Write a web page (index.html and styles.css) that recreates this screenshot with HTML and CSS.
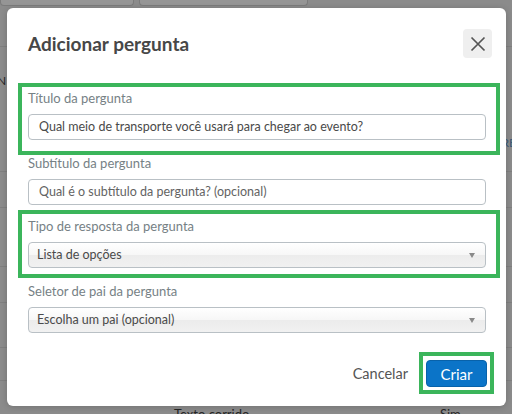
FILE: index.html
```html
<!DOCTYPE html>
<html lang="pt">
<head>
<meta charset="utf-8">
<title>Adicionar pergunta</title>
<link rel="stylesheet" href="styles.css">
</head>
<body>
<div class="page">
  <div class="tabs"><div class="tab tab-a"></div><div class="tab tab-b"></div></div>
  <div class="row r1"></div>
  <div class="row r2"><span class="cut-left">N</span><span class="cut-right">RE</span></div>
  <div class="row r3"></div>
  <div class="row r4"></div>
  <div class="row r5"></div>
  <div class="row r6"></div>
  <div class="row r7"></div>
  <div class="row r8"><span class="cell c1">Texto corrido</span><span class="cell c2">Sim</span></div>
</div>

<div class="modal" role="dialog" aria-labelledby="mtitle">
  <div class="modal-head">
    <h2 class="title" id="mtitle">Adicionar pergunta</h2>
    <button class="close" aria-label="Fechar">
      <svg width="16" height="16" viewBox="0 0 16 16"><path d="M1.5 1.5 L14.5 14.5 M14.5 1.5 L1.5 14.5" stroke="#555" stroke-width="1.7" fill="none"/></svg>
    </button>
  </div>

  <div class="form">
    <div class="field hl f1">
      <label class="label">Título da pergunta</label>
      <div class="input">Qual meio de transporte você usará para chegar ao evento?</div>
    </div>
    <div class="field f2">
      <label class="label">Subtítulo da pergunta</label>
      <div class="input placeholder">Qual é o subtítulo da pergunta? (opcional)</div>
    </div>
    <div class="field hl f3">
      <label class="label">Tipo de resposta da pergunta</label>
      <div class="input select"><span>Lista de opções</span><span class="arrow"></span></div>
    </div>
    <div class="field f4">
      <label class="label">Seletor de pai da pergunta</label>
      <div class="input select"><span>Escolha um pai (opcional)</span><span class="arrow"></span></div>
    </div>
  </div>

  <div class="footer">
    <span class="cancel">Cancelar</span>
    <div class="hl-btn"><button class="btn-primary">Criar</button></div>
  </div>
</div>
</body>
</html>
```

FILE: styles.css
```css
html, body {
  margin: 0;
  padding: 0;
}
body {
  width: 512px;
  height: 414px;
  overflow: hidden;
  position: relative;
  background: #8b8b8b;
  font-family: Lato, "Open Sans", sans-serif;
}

/* dimmed page behind the dialog */
.page {
  height: 414px;
}
.tabs {
  display: flex;
  gap: 5px;
  height: 6px;
}
.tab {
  height: 5px;
  background: #959595;
  border: 1px solid #7b7b7b;
  border-top: none;
  border-radius: 0 0 4px 4px;
}
.tab-a { width: 132px; }
.tab-b { width: 167px; }
.row {
  border-bottom: 1px solid #7f7f7f;
  position: relative;
  font-size: 13px;
  color: #262626;
}
.r1 { height: 40px; }
.r2 { height: 124px; }
.r3 { height: 35px; }
.r4 { height: 58px; }
.r5 { height: 35px; }
.r6 { height: 44px; }
.r7 { height: 32px; }
.r8 { height: 34px; }
.cut-left {
  position: absolute;
  left: -3px;
  top: 26px;
  font-size: 12px;
}
.cut-right {
  position: absolute;
  right: -4px;
  top: 88px;
  font-size: 12px;
  color: #3b5a78;
}
.cell {
  position: absolute;
  top: 25px;
}
.c1 { left: 174px; }
.c2 { left: 440px; }

/* dialog */
.modal {
  position: absolute;
  top: 8px;
  left: 7px;
  width: 499px;
  height: 398px;
  box-sizing: border-box;
  padding: 21px 20px 12px 21px;
  background: #fff;
  border-radius: 6px;
  box-shadow: 0 1px 6px rgba(0, 0, 0, 0.18);
  display: flex;
  flex-direction: column;
}
.modal-head {
  display: flex;
  justify-content: space-between;
  align-items: center;
  height: 29px;
  margin-right: -6px;
}
.title {
  margin: 0;
  font-size: 19px;
  font-weight: 700;
  color: #474747;
}
.close {
  width: 29px;
  height: 29px;
  padding: 0;
  border: none;
  border-radius: 4px;
  background: #efefef;
  display: flex;
  align-items: center;
  justify-content: center;
}

.form {
  margin-top: 25px;
}
.label {
  display: block;
  font-size: 13px;
  line-height: 16px;
  color: #768185;
}
.input {
  margin-top: 8px;
  height: 26px;
  box-sizing: border-box;
  border: 1px solid #b9c0c5;
  border-radius: 4px;
  padding: 0 10px;
  font-size: 12.5px;
  line-height: 24px;
  color: #4a4a4a;
  background: #fff;
}
.placeholder {
  color: #636363;
}
.select {
  display: flex;
  justify-content: space-between;
  align-items: center;
  padding: 0 10px 0 8px;
  background: linear-gradient(#ffffff, #f7f7f7 48%, #ececec 52%, #f1f1f1);
}
.arrow {
  width: 0;
  height: 0;
  border-left: 3.5px solid transparent;
  border-right: 3.5px solid transparent;
  border-top: 5px solid #8a8a8a;
}

.hl {
  border: 4px solid #3bb55b;
  margin-left: -10px;
  margin-right: -14px;
  padding-left: 6px;
  padding-right: 10px;
}
.f1 { padding-top: 3px; padding-bottom: 11px; }
.f3 { margin-top: 5px; padding-top: 4px; padding-bottom: 6px; }
.f4 { margin-top: 5px; }

.footer {
  margin-top: auto;
  margin-right: -8px;
  display: flex;
  justify-content: flex-end;
  align-items: center;
}
.cancel {
  font-size: 14.5px;
  color: #555;
  margin-right: 11px;
}
.hl-btn {
  border: 4px solid #3bb55b;
  padding: 4px 3px 3px 3px;
  display: flex;
}
.btn-primary {
  width: 61px;
  height: 27px;
  box-sizing: border-box;
  border: 1px solid #0862aa;
  border-radius: 4px;
  background: #0b74c8;
  color: #fff;
  font-family: Lato, "Open Sans", sans-serif;
  font-size: 15px;
  padding: 0;
}
```
